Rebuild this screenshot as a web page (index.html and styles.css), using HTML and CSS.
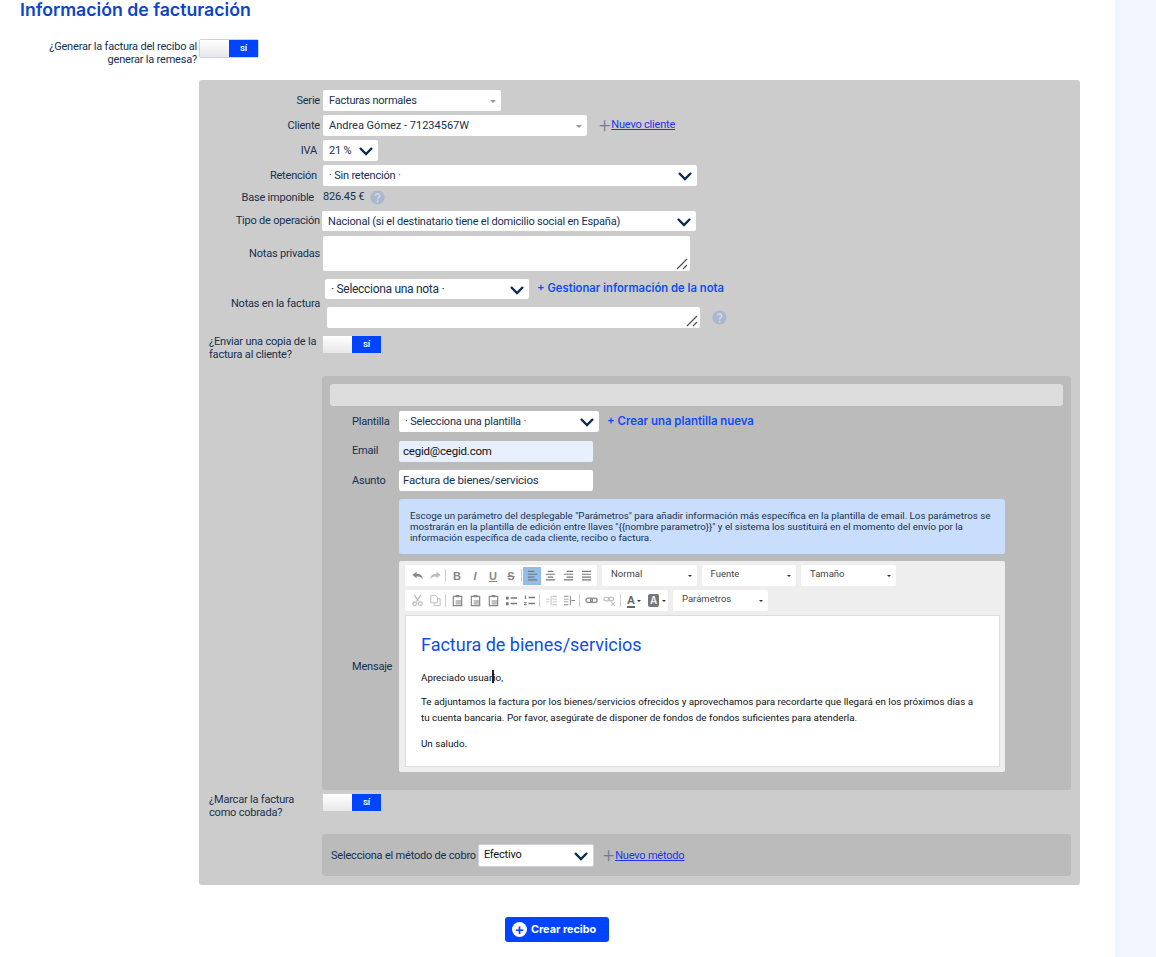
FILE: index.html
```html
<!DOCTYPE html>
<html lang="es">
<head>
<meta charset="utf-8">
<title>Información de facturación</title>
<link rel="stylesheet" href="styles.css">
</head>
<body>
<svg class="defs" width="0" height="0">
  <defs>
    <symbol id="chev" viewBox="0 0 16 10"><path d="M2 2l6 6 6-6" fill="none" stroke="#0d2b4e" stroke-width="2.4"/></symbol>
    <symbol id="grip" viewBox="0 0 12 12"><path d="M1 11L11 1M7 11l4-4" fill="none" stroke="#555" stroke-width="1.3"/></symbol>
    <symbol id="undo" viewBox="0 0 14 14"><path d="M6 3L1.5 6.5 6 10V8c3 0 5 .5 6.500 3 0-4-2.500-6-6.500-6z" fill="currentColor"/></symbol>
    <symbol id="redo" viewBox="0 0 14 14"><path d="M8 3l4.500 3.500L8 10V8c-3 0-5 .5-6.500 3 0-4 2.500-6 6.500-6z" fill="currentColor"/></symbol>
    <symbol id="left" viewBox="0 0 14 14"><path d="M2 2h7v1.300H2zM2 5h10v1.300H2zM2 8h7v1.300H2zM2 11h10v1.300H2z" fill="currentColor"/></symbol>
    <symbol id="center" viewBox="0 0 14 14"><path d="M4 2h6v1.300H4zM2 5h10v1.300H2zM4 8h6v1.300H4zM2 11h10v1.300H2z" fill="currentColor"/></symbol>
    <symbol id="right" viewBox="0 0 14 14"><path d="M5 2h7v1.300H5zM2 5h10v1.300H2zM5 8h7v1.300H5zM2 11h10v1.300H2z" fill="currentColor"/></symbol>
    <symbol id="just" viewBox="0 0 14 14"><path d="M2 2h10v1.300H2zM2 5h10v1.300H2zM2 8h10v1.300H2zM2 11h10v1.300H2z" fill="currentColor"/></symbol>
    <symbol id="cut" viewBox="0 0 14 14"><path d="M3.500 1l4.500 7M10.500 1L6 8" fill="none" stroke="currentColor" stroke-width="1.300"/><circle cx="4" cy="10.500" r="2" fill="none" stroke="currentColor" stroke-width="1.300"/><circle cx="10" cy="10.500" r="2" fill="none" stroke="currentColor" stroke-width="1.300"/></symbol>
    <symbol id="copy" viewBox="0 0 14 14"><path d="M2 1.500h5l2 2v6H2zM9 5h3v7.500H5.500V9.500" fill="none" stroke="currentColor"/></symbol>
    <symbol id="paste" viewBox="0 0 14 14"><path d="M2.500 2.500h9v10h-9z" fill="none" stroke="currentColor" stroke-width="1.300"/><path d="M5 1h4v2.500H5z" fill="currentColor"/><path d="M5 6.500h6v5H5z" fill="currentColor" opacity=".55"/></symbol>
    <symbol id="ul" viewBox="0 0 14 14"><path d="M1 3h3v3H1zM1 9h3v3H1zM6 3.500h7v1.500H6zM6 9.500h7v1.500H6z" fill="currentColor"/></symbol>
    <symbol id="ol" viewBox="0 0 14 14"><path d="M2 1.500h1.300v4H2zM1 8.500h3v1L2 11h2v1H1v-1l2-1.500H1zM6 3h7v1.500H6zM6 9.500h7v1.500H6z" fill="currentColor"/></symbol>
    <symbol id="outdent" viewBox="0 0 14 14"><path d="M8 2h5v1H8zM8 5h5v1H8zM8 8h5v1H8zM8 11h5v1H8zM1 5h4v1H1zM1 8h4v1H1zM6 2h1v10H6z" fill="currentColor"/></symbol>
    <symbol id="indent" viewBox="0 0 14 14"><path d="M1 2h5v1H1zM1 5h5v1H1zM1 8h5v1H1zM1 11h5v1H1zM9 6.500h4v1H9zM7.500 2h1v10h-1z" fill="currentColor"/></symbol>
    <symbol id="link" viewBox="0 0 14 14"><rect x="1" y="4.500" width="7" height="4.500" rx="2.200" fill="none" stroke="currentColor" stroke-width="1.400"/><rect x="6" y="4.500" width="7" height="4.500" rx="2.200" fill="none" stroke="currentColor" stroke-width="1.400"/></symbol>
    <symbol id="unlink" viewBox="0 0 14 14"><rect x="1" y="3.500" width="6" height="4" rx="2" fill="none" stroke="currentColor" stroke-width="1.300"/><rect x="5.500" y="3.500" width="6" height="4" rx="2" fill="none" stroke="currentColor" stroke-width="1.300"/><path d="M9 9l3.500 3.500M12.500 9L9 12.500" stroke="currentColor" stroke-width="1.200"/></symbol>
    <symbol id="qm" viewBox="0 0 16 16"><circle cx="8" cy="8" r="7.500" fill="#a9b8cd"/><path d="M5.700 6.200a2.300 2.200 0 1 1 3.500 1.900c-.8.500-1.200.9-1.200 1.900" fill="none" stroke="#d2d8e0" stroke-width="1.700"/><circle cx="8" cy="12.200" r="1" fill="#d2d8e0"/></symbol>
  </defs>
</svg>
<div class="page">
  <main class="main">
    <h1 class="title">Información de facturación</h1>

    <div class="top-row">
      <label class="top-label">¿Generar la factura del recibo al generar la remesa?</label>
      <div class="toggle toggle-top"><span class="toggle-off"></span><span class="toggle-on">SÍ</span></div>
    </div>

    <section class="panel">
      <div class="row row-serie">
        <label class="lbl">Serie</label>
        <div class="field w-serie"><span class="val">Facturas normales</span><i class="caret"></i></div>
      </div>
      <div class="row row-std">
        <label class="lbl">Cliente</label>
        <div class="field w-cliente"><span class="val">Andrea Gómez - 71234567W</span><i class="caret"></i></div>
        <a class="plain-add" href="#"><span class="plus">+</span><span class="ulink">Nuevo cliente</span></a>
      </div>
      <div class="row row-std">
        <label class="lbl lbl-in">IVA</label>
        <div class="field w-iva"><span class="val">21 %</span><svg class="chev"><use href="#chev"/></svg></div>
      </div>
      <div class="row row-std">
        <label class="lbl lbl-in">Retención</label>
        <div class="field w-ret"><span class="val">· Sin retención ·</span><svg class="chev"><use href="#chev"/></svg></div>
      </div>
      <div class="row row-base">
        <label class="lbl lbl-base">Base imponible</label>
        <span class="base-val">826.45 €</span>
        <svg class="qm"><use href="#qm"/></svg>
      </div>
      <div class="row row-tipo">
        <label class="lbl">Tipo de operación</label>
        <div class="field w-tipo"><span class="val">Nacional (si el destinatario tiene el domicilio social en España)</span><svg class="chev"><use href="#chev"/></svg></div>
      </div>
      <div class="row row-priv">
        <label class="lbl">Notas privadas</label>
        <div class="area w-priv"><svg class="grip"><use href="#grip"/></svg></div>
      </div>
      <div class="row row-notas">
        <label class="lbl">Notas en la factura</label>
        <div class="notas-col">
          <div class="notas-top">
            <div class="field w-nota"><span class="val">· Selecciona una nota ·</span><svg class="chev"><use href="#chev"/></svg></div>
            <a class="bold-add bold-note" href="#">+ Gestionar información de la nota</a>
          </div>
          <div class="notas-bottom">
            <div class="area w-fact"><svg class="grip"><use href="#grip"/></svg></div>
            <svg class="qm qm-notes"><use href="#qm"/></svg>
          </div>
        </div>
      </div>
      <div class="row row-copy">
        <label class="lbl lbl-left">¿Enviar una copia de la factura al cliente?</label>
        <div class="toggle"><span class="toggle-off"></span><span class="toggle-on">SÍ</span></div>
      </div>

      <section class="subpanel mail">
        <div class="mail-head"></div>
        <div class="mrow mrow-first">
          <label class="mlbl">Plantilla</label>
          <div class="field w-plant"><span class="val">· Selecciona una plantilla ·</span><svg class="chev"><use href="#chev"/></svg></div>
          <a class="bold-add" href="#">+ Crear una plantilla nueva</a>
        </div>
        <div class="mrow mrow-email">
          <label class="mlbl mlbl-up">Email</label>
          <div class="input input-auto">cegid@cegid.com</div>
        </div>
        <div class="mrow mrow-asunto">
          <label class="mlbl">Asunto</label>
          <div class="input">Factura de bienes/servicios</div>
        </div>
        <div class="info">Escoge un parámetro del desplegable "Parámetros" para añadir información más específica en la plantilla de email. Los parámetros se mostrarán en la plantilla de edición entre llaves "{{nombre parametro}}" y el sistema los sustituirá en el momento del envío por la información específica de cada cliente, recibo o factura.</div>
        <div class="mrow mrow-msg">
          <label class="mlbl">Mensaje</label>
          <div class="editor">
            <div class="tb-row">
              <div class="tb-group">
                <svg class="ic faint"><use href="#undo"/></svg>
                <svg class="ic vfaint"><use href="#redo"/></svg>
                <i class="sep"></i>
                <b class="tb-t">B</b>
                <em class="tb-t tb-i">I</em>
                <u class="tb-t">U</u>
                <s class="tb-t">S</s>
                <i class="sep"></i>
                <span class="ic-active"><svg class="ic"><use href="#left"/></svg></span>
                <svg class="ic"><use href="#center"/></svg>
                <svg class="ic"><use href="#right"/></svg>
                <svg class="ic"><use href="#just"/></svg>
              </div>
              <div class="combo"><span>Normal</span><i class="mini"></i></div>
              <div class="combo"><span>Fuente</span><i class="mini"></i></div>
              <div class="combo"><span>Tamaño</span><i class="mini"></i></div>
            </div>
            <div class="tb-row">
              <div class="tb-group">
                <svg class="ic vfaint"><use href="#cut"/></svg>
                <svg class="ic vfaint"><use href="#copy"/></svg>
                <i class="sep"></i>
                <svg class="ic faint"><use href="#paste"/></svg>
                <svg class="ic faint"><use href="#paste"/></svg>
                <svg class="ic faint"><use href="#paste"/></svg>
                <svg class="ic"><use href="#ul"/></svg>
                <svg class="ic"><use href="#ol"/></svg>
                <i class="sep"></i>
                <svg class="ic vfaint"><use href="#outdent"/></svg>
                <svg class="ic faint"><use href="#indent"/></svg>
                <i class="sep"></i>
                <svg class="ic faint"><use href="#link"/></svg>
                <svg class="ic vfaint"><use href="#unlink"/></svg>
                <i class="sep sep-wide"></i>
                <span class="tb-color"><span class="tb-a">A</span><i class="mini"></i></span>
                <span class="tb-bg"><span class="tb-bgbox">A</span><i class="mini"></i></span>
              </div>
              <div class="combo"><span>Parámetros</span><i class="mini"></i></div>
            </div>
            <div class="doc">
              <h2 class="doc-title">Factura de bienes/servicios</h2>
              <p class="doc-first">Apreciado usuar<span class="cursor"></span>io,</p>
              <p class="doc-body">Te adjuntamos la factura por los bienes/servicios ofrecidos y aprovechamos para recordarte que llegará en los próximos días a tu cuenta bancaria. Por favor, asegúrate de disponer de fondos de fondos suficientes para atenderla.</p>
              <p>Un saludo.</p>
            </div>
          </div>
        </div>
      </section>

      <div class="row row-paid">
        <label class="lbl lbl-left">¿Marcar la factura como cobrada?</label>
        <div class="toggle"><span class="toggle-off"></span><span class="toggle-on">SÍ</span></div>
      </div>

      <section class="subpanel method">
        <label class="method-lbl">Selecciona el método de cobro</label>
        <div class="field w-method"><span class="val val-dark">Efectivo</span><svg class="chev"><use href="#chev"/></svg></div>
        <a class="plain-add" href="#"><span class="plus">+</span><span class="ulink">Nuevo método</span></a>
      </section>
    </section>

    <div class="actions">
      <button class="create" type="button"><span class="create-ic">+</span>Crear recibo</button>
    </div>
  </main>
  <aside class="side"></aside>
</div>
</body>
</html>
```
FILE: styles.css
```css
* { box-sizing: border-box; }
html, body { margin: 0; padding: 0; }
body { font-family: Roboto, "Liberation Sans", sans-serif; font-size: 11px; letter-spacing: -.2px; color: #16304f; background: #fff; }
.defs { position: absolute; }
.page { display: flex; height: 957px; overflow: hidden; }
.main { width: 1115px; flex: none; }
.side { flex: 1; background: #f2f6fe; }

.title { margin: 0 0 0 20px; height: 39px; font: 600 17.7px/19px Inter, "Open Sans", sans-serif; letter-spacing: 0; color: #0b45c9; }

.top-row { display: flex; gap: 2px; height: 41px; }
.top-label { width: 197px; padding-left: 45px; text-align: right; line-height: 13px; padding-top: 1px; }

.toggle { display: flex; width: 58px; height: 17px; flex: none; }
.toggle-top { width: 60px; height: 19px; border: 1px solid #c9d3e3; border-radius: 2px; }
.toggle-off { flex: 1; background: linear-gradient(#fff, #e8e8e8); }
.toggle-on { width: 29px; background: #0044ff; color: #fff; font: 700 8px/17px Roboto, sans-serif; text-align: center; }

.panel { margin-left: 199px; width: 881px; height: 805px; background: #ccc; border-radius: 3px; padding-top: 10px; }
.row { display: flex; gap: 3px; }
.lbl { width: 121px; flex: none; text-align: right; }
.lbl-in { padding-right: 3px; }
.lbl-left { text-align: left; padding-left: 10px; line-height: 13px; margin-top: -1px; }
.row-serie, .row-std { height: 25px; align-items: flex-start; line-height: 21px; }
.row-base { height: 20px; align-items: flex-start; line-height: 16px; }
.lbl-base { padding-right: 6px; }
.base-val { margin-right: 3px; margin-top: -1px; }
.row-tipo { height: 25px; margin-top: 1px; line-height: 20px; }
.row-priv { height: 42px; line-height: 35px; }
.row-notas { height: 58px; }
.row-notas .lbl { padding-top: 19px; }
.row-copy { height: 40px; }
.row-paid { height: 40px; margin-top: 4px; }

.field { position: relative; height: 21px; background: #fff; border-radius: 2px; padding-left: 6px; line-height: 21px; flex: none; color: #16304f; }
.val { display: block; white-space: nowrap; overflow: hidden; }
.val-dark { color: #111; }
.caret { position: absolute; right: 5px; top: 10px; border: 3px solid transparent; border-top: 3px solid #999; border-bottom: 0; }
.chev { position: absolute; right: 4px; top: 6px; width: 16px; height: 10px; }
.w-serie { width: 178px; }
.w-cliente { width: 264px; letter-spacing: 0; }
.w-iva { width: 55px; }
.w-ret { width: 374px; }
.w-tipo { width: 374px; height: 20px; margin-left: -1px; line-height: 21px; }
.w-nota { width: 204px; height: 20px; line-height: 20px; font-size: 12px; letter-spacing: -.3px; }
.w-plant { width: 200px; }
.w-method { width: 116px; height: 23px; border: 1px solid #c9d3e3; padding-left: 5px; line-height: 20px; margin-left: -1px; }

.area { position: relative; height: 35px; background: #fff; border-radius: 2px; flex: none; }
.w-priv { width: 367px; }
.w-fact { width: 373px; height: 21px; }
.grip { position: absolute; right: 2px; bottom: 1px; width: 12px; height: 12px; }
.qm { width: 15px; height: 15px; flex: none; }
.qm-notes { margin: 3px 0 0 12px; }

.plain-add { display: flex; align-items: center; height: 19px; margin-left: 9px; text-decoration: none; }
.plus { color: #6c7d92; font-size: 20px; font-weight: 300; line-height: 18px; letter-spacing: 0; }
.ulink { color: #2233ee; text-decoration: underline; font-size: 11px; letter-spacing: -.2px; margin-left: 1px; }

.bold-add { color: #0f4cf5; font: 600 11.4px/18px Inter, "Open Sans", sans-serif; letter-spacing: 0; text-decoration: none; white-space: nowrap; }
.bold-note { font-size: 11.25px; }

.notas-col { display: flex; flex-direction: column; margin-top: 1px; }
.notas-top { display: flex; gap: 8px; margin-left: 2px; height: 28px; }
.notas-bottom { display: flex; margin-left: 4px; }

.subpanel { background: #bbb; border-radius: 3px; margin-left: 123px; width: 749px; }
.mail { height: 414px; padding: 8px; }
.mail-head { height: 22px; background: #ddd; border-radius: 3px; }
.mrow { display: flex; align-items: flex-start; }
.mlbl { width: 69px; padding-left: 22px; flex: none; line-height: 21px; }
.mlbl-up { margin-top: -1px; }
.mrow-first { margin-top: 5px; height: 30px; gap: 0; }
.mrow-first .bold-add { margin-left: 8px; line-height: 21px; }
.mrow-email { height: 29px; }
.mrow-asunto { height: 29px; }
.input { width: 194px; height: 21px; background: #fff; border-radius: 2px; padding-left: 4px; line-height: 21px; font-size: 11.5px; color: #16304f; }
.input-auto { background: #e8f0fe; color: #111; }
.info { margin-left: 69px; width: 606px; height: 55px; background: #c9defc; border-radius: 3px; padding: 11px; font-size: 9.75px; letter-spacing: 0; line-height: 11px; color: #16304f; }
.mrow-msg { margin-top: 7px; align-items: center; }

.editor { width: 606px; height: 211px; background: #eee; border-radius: 2px; padding: 4px 5px 5px 6px; letter-spacing: 0; }
.tb-row { display: flex; gap: 5px; height: 25px; }
.tb-group { display: flex; align-items: center; height: 21px; background: #fff; border-radius: 2px; padding: 0 2px 0 3px; color: #777; }
.ic { width: 13px; height: 13px; margin: 0 2.5px; color: #777; flex: none; }
.faint { color: #888; }
.vfaint { color: #bbb; }
.sep { width: 1px; height: 13px; background: #ccc; margin: 0 2px 0 1px; flex: none; }
.sep-wide { margin: 0 2px; }
.tb-t { width: 18px; text-align: center; font: 700 11px/18px "Liberation Sans", sans-serif; color: #888; }
.tb-i { font-style: italic; }
.ic-active { width: 18px; height: 18px; margin-left: -1px; background: #92bde7; display: flex; align-items: center; }
.combo { position: relative; width: 94.5px; height: 21px; background: #fff; border-radius: 2px; padding-left: 9px; line-height: 18px; font-size: 9.5px; color: #444; flex: none; }
.mini { position: absolute; right: 5px; top: 10px; border: 2px solid transparent; border-top: 2px solid #333; border-bottom: 0; }
.tb-color { position: relative; width: 18px; padding-left: 4px; font: 700 11px/12px "Liberation Sans", sans-serif; color: #666; }
.tb-a { display: inline-block; border-bottom: 2px solid #666; }
.tb-bg { position: relative; width: 25px; padding-left: 7px; font: 700 10px/13px "Liberation Sans", sans-serif; }
.tb-color .mini, .tb-bg .mini { top: 6px; right: 0; }
.tb-bgbox { display: block; width: 11px; background: #777; color: #eee; border-radius: 2px; text-align: center; }
.doc { background: #fff; height: 152px; width: 595px; border: 1px solid #ddd; padding: 18px 15px 0; font-size: 9.8px; line-height: 16px; color: #111; }
.doc p { margin: 0 0 9px; }
.doc .doc-first { margin-bottom: 8px; }
.doc .doc-body { margin-bottom: 10px; }
.doc-title { margin: 0 0 14px; font-weight: 400; font-size: 18px; line-height: 22px; color: #0d4fe8; }
.cursor { display: inline-block; width: 2px; height: 13px; background: #222; vertical-align: -2px; margin-right: -1px; }

.method { height: 42px; margin-top: 0; display: flex; align-items: center; padding-left: 9px; }
.method-lbl { margin-right: 3px; }

.actions { display: flex; justify-content: center; padding: 32px 0 0 0; width: 1114px; }
.create { display: flex; align-items: center; gap: 4px; width: 104px; height: 25px; background: #0044ff; color: #fff; border: 0; border-radius: 3px; padding: 0 0 0 7px; font: 700 10.8px/25px Inter, "Open Sans", sans-serif; }
.create-ic { width: 15px; height: 15px; border-radius: 50%; background: #fff; color: #0044ff; font: 700 15px/15px "Liberation Sans", sans-serif; text-align: center; }
```
